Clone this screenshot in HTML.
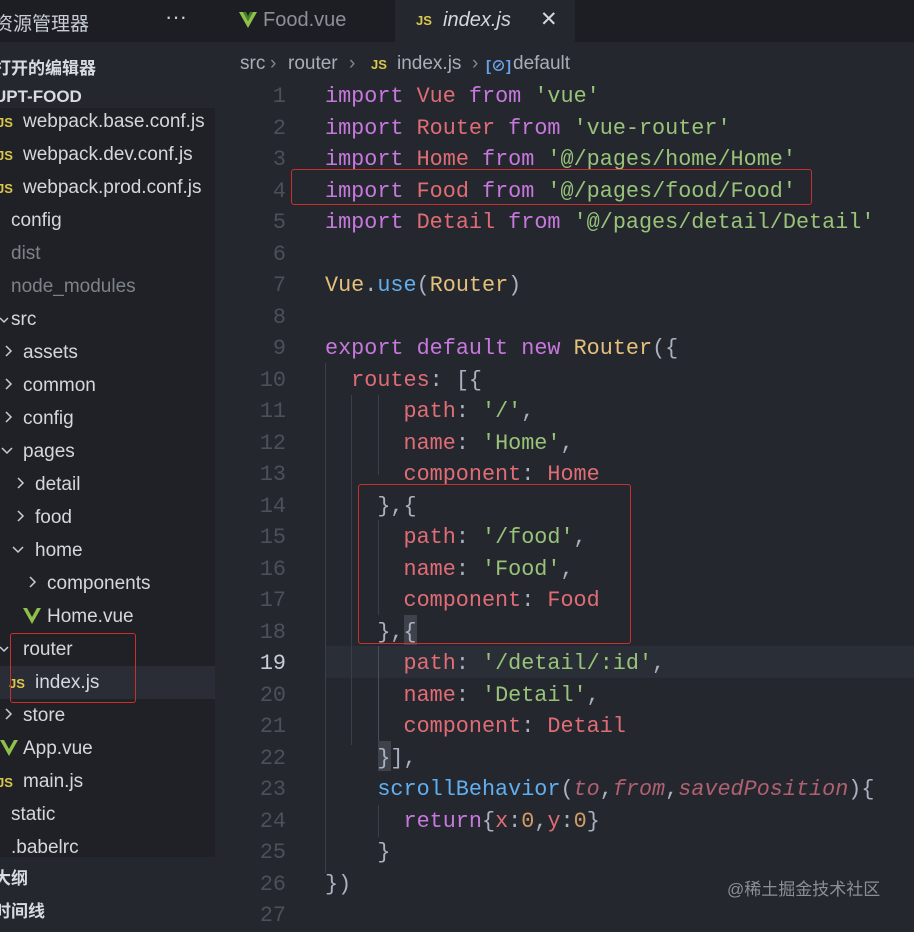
<!DOCTYPE html>
<html><head><meta charset="utf-8"><style>
*{margin:0;padding:0;box-sizing:border-box}
body{width:914px;height:922px;overflow:hidden;background:#24272e;position:relative;font-family:"Liberation Sans","Noto Sans CJK SC",sans-serif;color:#c8ccd4}
.a{position:absolute;white-space:pre}
#tabs{position:absolute;left:0;top:0;width:914px;height:42px;background:#1c1e23}
.side{position:absolute;left:0;top:108px;width:215px;height:749px;background:#1f2127}
.si{position:absolute;font-size:19px;line-height:33px;height:33px;color:#d4d7dc}
.hd{font-weight:bold;font-size:17px;color:#d8dbe0}
.js{font-family:"Liberation Sans",sans-serif;font-weight:bold;font-size:13px;color:#d9c84a;position:absolute}
.code{position:absolute;left:325px;top:81px;font-family:"Liberation Mono",monospace;font-size:21.8px;line-height:31.5px;color:#abb2bf;white-space:pre}
.ln{position:absolute;left:230px;width:56px;top:81px;text-align:right;font-family:"Liberation Mono",monospace;font-size:21.8px;line-height:31.5px;color:#4b5059;white-space:pre}
.k{color:#c678dd}.r{color:#e06c75}.s{color:#98c379}.y{color:#e5c07b}.b{color:#61afef}.p{color:#b06070;font-style:italic}.o{color:#d19a66}
.box{position:absolute;border:1.3px solid #c8302c;border-radius:3px}
.bc{position:absolute;top:53px;font-size:19px;color:#a9adb5;white-space:pre}
</style></head><body>
<div id="tabs"></div>
<div class="a" style="left:395px;top:0;width:180px;height:42px;background:#24272e"></div>
<div class="a" style="left:-6px;top:9px;font-size:19px;color:#c8ccd4">资源管理器</div>
<div class="a" style="left:165px;top:4px;font-size:22px;color:#c8ccd4">···</div>
<svg class="a" style="left:239px;top:12px" width="18" height="16" viewBox="0 0 18 16"><path d="M0 0H4L9 9L14 0H18L9 16Z" fill="#8dc149"/><path d="M4 0H7L9 4L11 0H14L9 9Z" fill="#4a7a2a"/></svg>
<div class="a" style="left:263px;top:9px;font-size:20px;color:#8b9099">Food.vue</div>
<div class="js" style="left:416px;top:13px">JS</div>
<div class="a" style="left:443px;top:9px;font-size:20px;font-style:italic;color:#d4d7dc">index.js</div>
<div class="a" style="left:540px;top:7px;font-size:21px;color:#d4d7dc">✕</div>

<div class="a hd" style="left:-6px;top:54px">打开的编辑器</div>
<div class="a hd" style="left:-6px;top:87px">UPT-FOOD</div>
<div class="bc" style="left:240px">src</div>
<div class="bc" style="left:270px;color:#888">›</div>
<div class="bc" style="left:288px">router</div>
<div class="bc" style="left:349px;color:#888">›</div>
<div class="js" style="left:371px;top:57px">JS</div>
<div class="bc" style="left:397px">index.js</div>
<div class="bc" style="left:472px;color:#888">›</div>
<div class="a" style="left:486px;top:55px;font-size:15px;color:#6aa1e8;font-weight:bold">[⊘]</div>
<div class="bc" style="left:513px">default</div>

<div class="side"></div>
<div class="a" style="left:0;top:666px;width:215px;height:33px;background:#2a2d35"></div>
<div style="position:absolute;left:0;top:105px">
<div class="js" style="left:-3px;top:10px">JS</div><div class="si" style="left:23px;top:0">webpack.base.conf.js</div>
<div class="js" style="left:-3px;top:43px">JS</div><div class="si" style="left:23px;top:33px">webpack.dev.conf.js</div>
<div class="js" style="left:-3px;top:76px">JS</div><div class="si" style="left:23px;top:66px">webpack.prod.conf.js</div>
<div class="si" style="left:11px;top:99px">config</div>
<div class="si" style="left:11px;top:132px;color:#7d828a">dist</div>
<div class="si" style="left:11px;top:165px;color:#7d828a">node_modules</div>
<div class="si" style="left:11px;top:198px">src</div>
<div class="si" style="left:23px;top:231px">assets</div>
<div class="si" style="left:23px;top:264px">common</div>
<div class="si" style="left:23px;top:297px">config</div>
<div class="si" style="left:23px;top:330px">pages</div>
<div class="si" style="left:35px;top:363px">detail</div>
<div class="si" style="left:35px;top:396px">food</div>
<div class="si" style="left:35px;top:429px">home</div>
<div class="si" style="left:47px;top:462px">components</div>
<svg class="a" style="left:23px;top:503px" width="18" height="16" viewBox="0 0 18 16"><path d="M0 0H4L9 9L14 0H18L9 16Z" fill="#8dc149"/></svg>
<div class="si" style="left:47px;top:495px">Home.vue</div>
<div class="si" style="left:23px;top:528px">router</div>
<div class="js" style="left:9px;top:571px">JS</div><div class="si" style="left:35px;top:561px">index.js</div>
<div class="si" style="left:23px;top:594px">store</div>
<svg class="a" style="left:0;top:635px" width="18" height="16" viewBox="0 0 18 16"><path d="M0 0H4L9 9L14 0H18L9 16Z" fill="#8dc149"/></svg>
<div class="si" style="left:23px;top:627px">App.vue</div>
<div class="js" style="left:-3px;top:670px">JS</div><div class="si" style="left:23px;top:660px">main.js</div>
<div class="si" style="left:11px;top:693px">static</div>
<div class="si" style="left:11px;top:726px">.babelrc</div>
</div>
<svg class="a" style="left:0;top:0" width="60" height="920" fill="none" stroke="#c8ccd4" stroke-width="1.5">
<path d="M0 318l4 4 4-4"/>
<path d="M6 346l5 5-5 5"/><path d="M6 379l5 5-5 5"/><path d="M6 412l5 5-5 5"/>
<path d="M2 448l5 5 5-5"/>
<path d="M18 478l5 5-5 5"/><path d="M18 511l5 5-5 5"/>
<path d="M13 547l5 5 5-5"/>
<path d="M30 577l5 5-5 5"/>
<path d="M0 647l4 4 4-4"/>
<path d="M6 709l5 5-5 5"/>
</svg>
<div class="box" style="left:10px;top:633px;width:126px;height:70px"></div>
<div class="a hd" style="left:-6px;top:864px">大纲</div>
<div class="a hd" style="left:-6px;top:897px">时间线</div>

<div class="a" style="left:325px;top:646px;width:589px;height:32px;background:#2a2e36"></div>
<div class="a" style="left:325px;top:363px;width:1px;height:510px;background:#3a3e46"></div>
<div class="a" style="left:351px;top:395px;width:1px;height:350px;background:#3a3e46"></div>
<div class="a" style="left:378px;top:395px;width:1px;height:80px;background:#3a3e46"></div>
<div class="a" style="left:378px;top:520px;width:1px;height:95px;background:#3a3e46"></div>
<div class="a" style="left:378px;top:646px;width:1px;height:95px;background:#4a4e56"></div>
<div class="a" style="left:378px;top:805px;width:1px;height:32px;background:#3a3e46"></div>
<div class="a" style="left:404px;top:615px;width:13px;height:30px;background:#3d424b"></div>
<div class="a" style="left:378px;top:741px;width:13px;height:30px;background:#3d424b"></div>
<div class="ln">1
2
3
4
5
6
7
8
9
10
11
12
13
14
15
16
17
18
<span style="color:#c8ccd4">19</span>
20
21
22
23
24
25
26
27</div>
<div class="code"><span class="k">import</span> <span class="r">Vue</span> <span class="k">from</span> <span class="s">'vue'</span>
<span class="k">import</span> <span class="r">Router</span> <span class="k">from</span> <span class="s">'vue-router'</span>
<span class="k">import</span> <span class="r">Home</span> <span class="k">from</span> <span class="s">'@/pages/home/Home'</span>
<span class="k">import</span> <span class="r">Food</span> <span class="k">from</span> <span class="s">'@/pages/food/Food'</span>
<span class="k">import</span> <span class="r">Detail</span> <span class="k">from</span> <span class="s">'@/pages/detail/Detail'</span>

<span class="y">Vue</span>.<span class="b">use</span>(<span class="y">Router</span>)

<span class="k">export</span> <span class="k">default</span> <span class="k">new</span> <span class="y">Router</span>({
  <span class="r">routes</span>: [{
      <span class="r">path</span>: <span class="s">'/'</span>,
      <span class="r">name</span>: <span class="s">'Home'</span>,
      <span class="r">component</span>: <span class="r">Home</span>
    },{
      <span class="r">path</span>: <span class="s">'/food'</span>,
      <span class="r">name</span>: <span class="s">'Food'</span>,
      <span class="r">component</span>: <span class="r">Food</span>
    },{
      <span class="r">path</span>: <span class="s">'/detail/:id'</span>,
      <span class="r">name</span>: <span class="s">'Detail'</span>,
      <span class="r">component</span>: <span class="r">Detail</span>
    }],
    <span class="b">scrollBehavior</span>(<span class="p">to</span>,<span class="p">from</span>,<span class="p">savedPosition</span>){
      <span class="k">return</span>{<span class="r">x</span>:<span class="o">0</span>,<span class="r">y</span>:<span class="o">0</span>}
    }
})</div>
<div class="box" style="left:291px;top:169px;width:521px;height:36px"></div>
<div class="box" style="left:358px;top:484px;width:273px;height:160px"></div>
<div class="a" style="left:727px;top:875px;font-size:17px;color:#8b8f96">@稀土掘金技术社区</div>
</body></html>
